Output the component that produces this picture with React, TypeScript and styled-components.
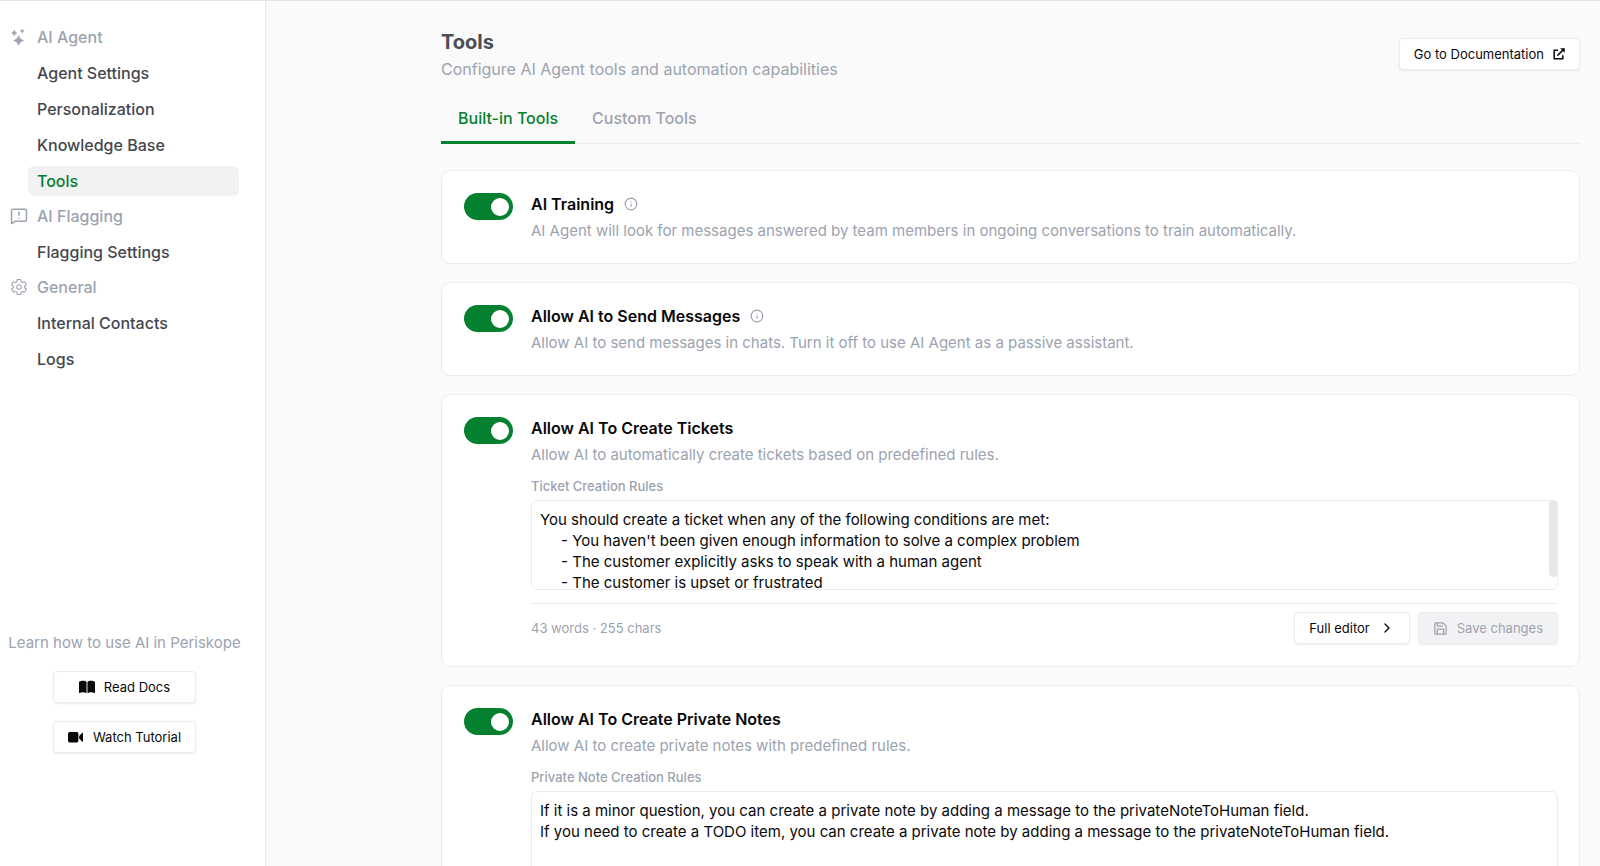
import React, { useLayoutEffect, useRef, useState } from "react";
import styled, { createGlobalStyle, css } from "styled-components";
import { ChevronRight, Info, MessageSquareWarning, Save } from "lucide-react";
import { IoSettingsOutline } from "react-icons/io5";
import { FaBookOpen } from "react-icons/fa6";

const color = {
  text: "#09090b",
  heading: "#4b4e55",
  nav: "#44474f",
  muted: "#9ca3af",
  green: "#04802e",
  line: "#ececee",
  page: "#fafafa",
  hover: "#f2f2f4",
};

const GlobalStyle = createGlobalStyle`
  *, *::before, *::after { box-sizing: border-box; }
  body {
    margin: 0;
    background: ${color.page};
    color: ${color.text};
    font-family: Inter, "Liberation Sans", sans-serif;
    font-size: 15px;
  }
  button, textarea { font-family: inherit; }
`;

const Page = styled.div`
  display: flex;
  height: 100vh;
  border-top: 1px solid #e4e4e7;
`;

const Sidebar = styled.aside`
  flex: none;
  width: 266px;
  display: flex;
  flex-direction: column;
  justify-content: space-between;
  padding: 21px 26px 113px 10px;
  background: #fff;
  border-right: 1px solid ${color.line};
`;

const Nav = styled.nav`
  display: flex;
  flex-direction: column;
  gap: 5px;
`;

const NavGroup = styled.section`
  display: flex;
  flex-direction: column;
  gap: 6px;
`;

const NavHeading = styled.h2`
  display: flex;
  align-items: center;
  gap: 9px;
  height: 30px;
  margin: 0;
  color: ${color.muted};
  font-size: 16px;
  font-weight: 500;

  svg {
    flex: none;
    width: 18px;
    height: 18px;
  }
`;

const NavLink = styled.a<{ $active?: boolean }>`
  display: flex;
  align-items: center;
  height: 30px;
  margin-left: 18px;
  padding: 0 9px;
  border-radius: 6px;
  font-size: 16px;
  font-weight: 500;
  text-decoration: none;
  color: ${(p) => (p.$active ? color.green : color.nav)};
  background: ${(p) => (p.$active ? color.hover : "transparent")};
`;

const HelpBox = styled.div`
  display: flex;
  flex-direction: column;
  align-items: center;
  gap: 18px;
`;

const HelpText = styled.p`
  margin: 0;
  color: ${color.muted};
  line-height: 20px;
  white-space: nowrap;
`;

const Button = styled.button<{ $width?: number }>`
  display: inline-flex;
  align-items: center;
  justify-content: center;
  gap: 9px;
  height: 32px;
  padding: 0 14px;
  ${(p) => p.$width && css`width: ${p.$width}px;`}
  border: 1px solid ${color.line};
  border-radius: 4px;
  background: #fff;
  color: ${color.text};
  font-size: 13px;
  white-space: nowrap;
  box-shadow: 0 1px 2px rgba(0, 0, 0, 0.08);

  svg {
    flex: none;
  }

  &:disabled {
    background: ${color.hover};
    color: ${color.muted};
  }
`;

const Main = styled.main`
  flex: 1;
  min-width: 0;
  overflow-y: auto;
  padding: 27px 20px 27px 175px;
`;

const Header = styled.header`
  display: flex;
  align-items: flex-start;
  justify-content: space-between;
`;

const HeaderAction = styled.div`
  padding-top: 10px;
`;

const Title = styled.h1`
  margin: 0;
  color: ${color.heading};
  font-size: 20px;
  line-height: 28px;
  font-weight: 700;
`;

const Subtitle = styled.p`
  margin: 0;
  color: ${color.muted};
  font-size: 16px;
  line-height: 26px;
`;

const Tabs = styled.div`
  display: flex;
  margin-top: 12px;
  border-bottom: 1px solid ${color.line};
`;

const Tab = styled.button<{ $active?: boolean }>`
  height: 50px;
  margin-bottom: -1px;
  padding: 0 17px;
  border: 0;
  border-bottom: 3px solid ${(p) => (p.$active ? color.green : "transparent")};
  background: none;
  color: ${(p) => (p.$active ? color.green : color.muted)};
  font-size: 16px;
  font-weight: 500;
`;

const CardList = styled.div`
  display: flex;
  flex-direction: column;
  gap: 18px;
  padding-top: 26px;
`;

const Card = styled.section`
  display: flex;
  gap: 18px;
  padding: 21px 21px 20px 22px;
  border: 1px solid ${color.line};
  border-radius: 9px;
  background: #fff;
`;

const Switch = styled.input`
  appearance: none;
  flex: none;
  display: flex;
  align-items: center;
  width: 49px;
  height: 27px;
  margin: 1px 0 0;
  padding: 0 4px;
  border-radius: 14px;
  background: #d4d4d8;

  &::before {
    content: "";
    width: 18px;
    height: 18px;
    border-radius: 50%;
    background: #fff;
  }

  &:checked {
    justify-content: flex-end;
    background: ${color.green};
  }
`;

const CardBody = styled.div`
  flex: 1;
  min-width: 0;
`;

const CardHead = styled.div`
  display: flex;
  align-items: center;
  gap: 10px;
`;

const CardTitle = styled.label`
  line-height: 24px;
  font-size: 16px;
  font-weight: 600;
`;

const InfoButton = styled.button`
  display: flex;
  padding: 0;
  border: 0;
  background: none;
  color: ${color.muted};
`;

const CardText = styled.p`
  margin: 3px 0 0;
  color: ${color.muted};
  font-size: 15px;
  line-height: 24px;
`;

const FieldLabel = styled.label`
  display: block;
  margin: 9px 0 4px;
  color: ${color.muted};
  font-size: 13px;
  font-weight: 500;
  line-height: 20px;
`;

const EditorFrame = styled.div`
  position: relative;
`;

const EditorInput = styled.textarea`
  display: block;
  width: 100%;
  height: 90px;
  padding: 8px;
  border: 1px solid ${color.line};
  border-radius: 6px;
  background: #fff;
  color: ${color.text};
  font-size: 15px;
  line-height: 21px;
  resize: none;
  scrollbar-width: none;
`;

const ScrollThumb = styled.div`
  position: absolute;
  top: 0;
  right: 0;
  width: 9px;
  border-radius: 5px;
  background: #e5e7eb;
  pointer-events: none;
`;

const CardFooter = styled.div`
  display: flex;
  align-items: center;
  justify-content: space-between;
  margin: 13px 0 2px;
  padding-top: 8px;
  border-top: 1px solid ${color.line};
`;

const Counter = styled.span`
  color: ${color.muted};
  font-size: 13px;
`;

const Actions = styled.div`
  display: flex;
  gap: 8px;
`;

const SparklesIcon = () => (
  <svg viewBox="0 0 18 18" fill="currentColor" stroke="currentColor" strokeWidth=".4" aria-hidden="true">
    <path d="M8.6 7.2Q9.6 11.5 13.8 12.5Q9.6 13.5 8.6 17.6Q7.6 13.5 3.4 12.5Q7.6 11.5 8.6 7.2Z" />
    <path d="M4.3 2Q4.8 4.4 7 5Q4.8 5.6 4.3 8Q3.8 5.6 1.6 5Q3.8 4.4 4.3 2Z" />
    <path d="M12.2 1Q12.6 2.6 14.2 3Q12.6 3.4 12.2 5Q11.8 3.4 10.2 3Q11.8 2.6 12.2 1Z" />
  </svg>
);

const ExternalIcon = () => (
  <svg width="12" height="12" viewBox="0 0 12 12" fill="none" stroke="currentColor" strokeWidth="1.5" aria-hidden="true">
    <path d="M5 2.2H1.2V10.8H9.8V7.2M4.3 7.7L10.6 1.4" />
    <path d="M7.2.2H11.8V4.8Z" fill="currentColor" stroke="none" />
  </svg>
);

const VideoIcon = () => (
  <svg width="16" height="12" viewBox="0 0 16 12" fill="currentColor" aria-hidden="true">
    <rect x="0" y="1" width="10.4" height="10.4" rx="1.6" />
    <path d="M11.2 5L14 2Q15 1.2 15 2.4V10Q15 11.2 14 10.4L11.2 7.4Z" />
  </svg>
);

const navGroups = [
  {
    title: "AI Agent",
    icon: <SparklesIcon />,
    links: ["Agent Settings", "Personalization", "Knowledge Base", "Tools"],
  },
  {
    title: "AI Flagging",
    icon: <MessageSquareWarning strokeWidth={2} />,
    links: ["Flagging Settings"],
  },
  {
    title: "General",
    icon: <IoSettingsOutline />,
    links: ["Internal Contacts", "Logs"],
  },
];

interface Tool {
  id: string;
  title: string;
  text: string;
  info?: boolean;
  rules?: { label: string; value: string; count: string };
}

const tools: Tool[] = [
  {
    id: "training",
    title: "AI Training",
    text: "AI Agent will look for messages answered by team members in ongoing conversations to train automatically.",
    info: true,
  },
  {
    id: "send",
    title: "Allow AI to Send Messages",
    text: "Allow AI to send messages in chats. Turn it off to use AI Agent as a passive assistant.",
    info: true,
  },
  {
    id: "tickets",
    title: "Allow AI To Create Tickets",
    text: "Allow AI to automatically create tickets based on predefined rules.",
    rules: {
      label: "Ticket Creation Rules",
      value: [
        "You should create a ticket when any of the following conditions are met:",
        "     - You haven't been given enough information to solve a complex problem",
        "     - The customer explicitly asks to speak with a human agent",
        "     - The customer is upset or frustrated",
      ].join("\n"),
      count: "43 words · 255 chars",
    },
  },
  {
    id: "notes",
    title: "Allow AI To Create Private Notes",
    text: "Allow AI to create private notes with predefined rules.",
    rules: {
      label: "Private Note Creation Rules",
      value: [
        "If it is a minor question, you can create a private note by adding a message to the privateNoteToHuman field.",
        "If you need to create a TODO item, you can create a private note by adding a message to the privateNoteToHuman field.",
      ].join("\n"),
      count: "42 words · 227 chars",
    },
  },
];

/* Text area with its own slim scroll thumb, sized from the text's height. */
const Editor = ({ id, value }: { id: string; value: string }) => {
  const input = useRef<HTMLTextAreaElement>(null);
  const [thumb, setThumb] = useState({ height: 0, offset: 0 });

  const measure = () => {
    const el = input.current;
    if (!el) return;
    const ratio = el.clientHeight / el.scrollHeight;
    setThumb(
      ratio < 1
        ? { height: Math.round(el.clientHeight * ratio), offset: Math.round(el.scrollTop * ratio) }
        : { height: 0, offset: 0 }
    );
  };

  useLayoutEffect(measure, []);

  return (
    <EditorFrame>
      <EditorInput
        ref={input}
        id={id}
        defaultValue={value}
        spellCheck={false}
        onScroll={measure}
        onInput={measure}
      />
      {thumb.height > 0 && <ScrollThumb style={{ height: thumb.height, marginTop: thumb.offset }} />}
    </EditorFrame>
  );
};

const ToolCard = ({ tool }: { tool: Tool }) => (
  <Card>
    <Switch type="checkbox" role="switch" id={tool.id} defaultChecked />
    <CardBody>
      <CardHead>
        <CardTitle htmlFor={tool.id}>{tool.title}</CardTitle>
        {tool.info && (
          <InfoButton type="button" aria-label={`About ${tool.title}`}>
            <Info size={14} strokeWidth={2} />
          </InfoButton>
        )}
      </CardHead>
      <CardText>{tool.text}</CardText>
      {tool.rules && (
        <>
          <FieldLabel htmlFor={`${tool.id}-rules`}>{tool.rules.label}</FieldLabel>
          <Editor id={`${tool.id}-rules`} value={tool.rules.value} />
          <CardFooter>
            <Counter>{tool.rules.count}</Counter>
            <Actions>
              <Button type="button">
                Full editor
                <ChevronRight size={16} />
              </Button>
              <Button type="button" disabled>
                <Save size={15} strokeWidth={2} />
                Save changes
              </Button>
            </Actions>
          </CardFooter>
        </>
      )}
    </CardBody>
  </Card>
);

export default function App() {
  return (
    <>
      <GlobalStyle />
      <Page>
        <Sidebar>
          <Nav aria-label="AI settings">
            {navGroups.map((group) => (
              <NavGroup key={group.title}>
                <NavHeading>
                  {group.icon}
                  {group.title}
                </NavHeading>
                {group.links.map((link) => (
                  <NavLink key={link} href="#" $active={link === "Tools"}>
                    {link}
                  </NavLink>
                ))}
              </NavGroup>
            ))}
          </Nav>
          <HelpBox>
            <HelpText>Learn how to use AI in Periskope</HelpText>
            <Button type="button" $width={143}>
              <FaBookOpen size={16} />
              Read Docs
            </Button>
            <Button type="button" $width={143}>
              <VideoIcon />
              Watch Tutorial
            </Button>
          </HelpBox>
        </Sidebar>
        <Main>
          <Header>
            <div>
              <Title>Tools</Title>
              <Subtitle>Configure AI Agent tools and automation capabilities</Subtitle>
            </div>
            <HeaderAction>
              <Button type="button">
                Go to Documentation
                <ExternalIcon />
              </Button>
            </HeaderAction>
          </Header>
          <Tabs role="tablist">
            <Tab type="button" role="tab" aria-selected="true" $active>
              Built-in Tools
            </Tab>
            <Tab type="button" role="tab" aria-selected="false">
              Custom Tools
            </Tab>
          </Tabs>
          <CardList>
            {tools.map((tool) => (
              <ToolCard key={tool.id} tool={tool} />
            ))}
          </CardList>
        </Main>
      </Page>
    </>
  );
}
